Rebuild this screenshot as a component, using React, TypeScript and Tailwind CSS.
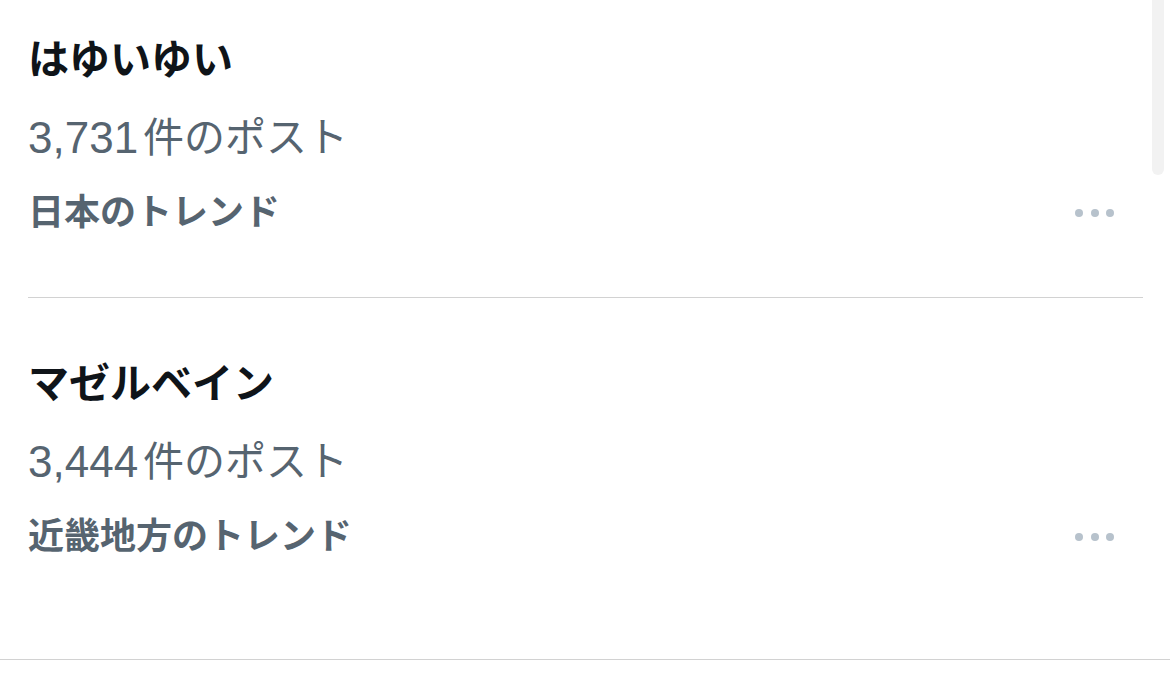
import React from 'react';

const trends = [
  { name: 'はゆいゆい', count: '3,731', place: '日本のトレンド' },
  { name: 'マゼルベイン', count: '3,444', place: '近畿地方のトレンド' },
];

const Dots: React.FC = () => (
  <svg width="42" height="10" viewBox="0 0 42 10" className="shrink-0">
    <circle cx="5" cy="5" r="4" fill="#b7c2cc" />
    <circle cx="21" cy="5" r="4" fill="#b7c2cc" />
    <circle cx="36" cy="5" r="4" fill="#b7c2cc" />
  </svg>
);

const App: React.FC = () => {
  return (
    <div
      className="relative w-[1170px] h-[690px] overflow-hidden bg-white"
      style={{ fontFamily: '"Liberation Sans", "Noto Sans CJK JP", sans-serif' }}
    >
      {/* scrollbar */}
      <div className="absolute top-0 right-[6px] w-[12px] h-[175px] rounded-b-full bg-[#f2f2f2]" />

      {trends.map((t, idx) => (
        <div
          key={idx}
          className={idx === 0 ? 'pl-[28px] pr-[27px]' : 'pl-[28px] pr-[27px] border-b border-[#d2d2d2]'}
        >
          <div className={idx === 0 ? 'pt-[35px] pb-[62px] border-b border-[#d2d2d2]' : 'pt-[61px] pb-[100px]'}>
            <div className="text-[41px] leading-[50px] font-bold text-[#0f1419]">{t.name}</div>
            <div className="mt-[28px] h-[50px] flex items-center text-[41px] leading-none text-[#566470]">
              <span className="text-[44px] leading-none">{t.count}</span>
              <span className="ml-[5px] leading-none">件のポスト</span>
            </div>
            <div className="mt-[28px] flex items-center justify-between pr-[27px]">
              <span className="text-[36px] leading-[44px] font-bold text-[#566470]">{t.place}</span>
              <Dots />
            </div>
          </div>
        </div>
      ))}
    </div>
  );
};

export default App;
